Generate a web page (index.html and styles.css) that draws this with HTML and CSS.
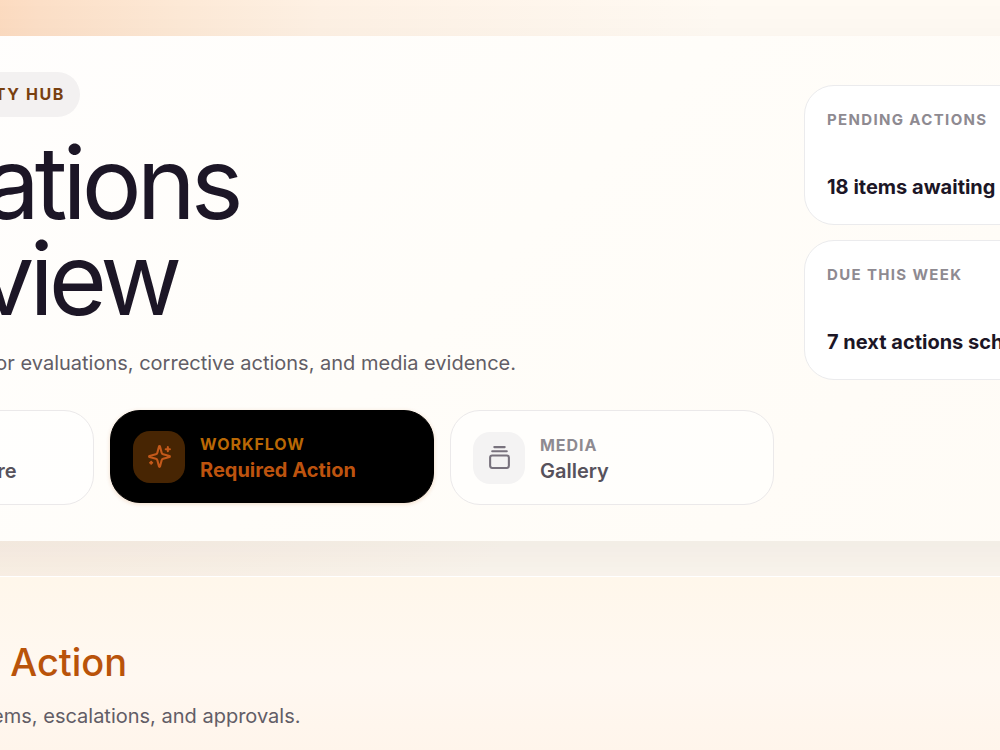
FILE: index.html
```html
<!DOCTYPE html>
<html lang="en">

<head>
    <meta charset="UTF-8">
    <title>Operations Overview</title>
    <link rel="stylesheet" href="styles.css">
</head>

<body>
    <main class="page">
        <header class="hero">
            <div class="intro">
                <p class="pill">Quality Activity Hub</p>
                <h1>Operations<br>Overview</h1>
                <p class="lead">Dashboard workspace for evaluations, corrective actions, and media evidence.</p>
                <nav class="tabs">
                    <a class="tab" href="#care">
                        <span class="icon"></span>
                        <span class="label">
                            <span class="kicker">Review</span>
                            <span class="name">Continuing Care</span>
                        </span>
                    </a>
                    <a class="tab active" href="#action">
                        <span class="icon">
                            <svg viewBox="0 0 24 24">
                                <path d="M9.937 15.5A2 2 0 0 0 8.5 14.063l-6.135-1.582a.5.5 0 0 1 0-.962L8.5 9.936A2 2 0 0 0 9.937 8.5l1.582-6.135a.5.5 0 0 1 .963 0L14.063 8.5A2 2 0 0 0 15.5 9.937l6.135 1.581a.5.5 0 0 1 0 .964L15.5 14.063a2 2 0 0 0-1.437 1.437l-1.582 6.135a.5.5 0 0 1-.963 0z" />
                                <path d="M20 3v4M22 5h-4M4 17v2M5 18H3" />
                            </svg>
                        </span>
                        <span class="label">
                            <span class="kicker">Workflow</span>
                            <span class="name">Required Action</span>
                        </span>
                    </a>
                    <a class="tab" href="#gallery">
                        <span class="icon">
                            <svg viewBox="0 0 24 24">
                                <path d="M7 2h10M5 6h14" />
                                <rect x="3" y="10" width="18" height="12" rx="2" />
                            </svg>
                        </span>
                        <span class="label">
                            <span class="kicker">Media</span>
                            <span class="name">Gallery</span>
                        </span>
                    </a>
                </nav>
            </div>
            <aside class="stats">
                <div class="stat">
                    <p class="kicker">Pending Actions</p>
                    <p class="value">18 items awaiting review</p>
                </div>
                <div class="stat">
                    <p class="kicker">Due This Week</p>
                    <p class="value">7 next actions scheduled</p>
                </div>
            </aside>
        </header>
        <section class="panel" id="action">
            <span class="icon"></span>
            <div>
                <h2>Required Action</h2>
                <p class="lead">Prioritize open items, escalations, and approvals.</p>
            </div>
        </section>
    </main>
</body>

</html>
```
FILE: styles.css
```css
* {
    box-sizing: border-box;
}

html {
    overflow: hidden;
}

body {
    margin: 0;
    height: 100vh;
    overflow: hidden;
    font-family: Inter, "Liberation Sans", sans-serif;
    color: #1c1626;
    background: radial-gradient(circle at -80px 0, #fdd3b2 0, #fcdfc7 120px, #fde9d6 260px, #fef1e4 400px, rgba(255, 247, 236, 0) 800px), #fffaf3;
}

h1,
h2,
p {
    margin: 0;
}

/* the board is wider than the window on both sides */
.page {
    margin: 0 -200px 0 -266px;
    padding-top: 36px;
    display: flex;
    flex-direction: column;
    gap: 35px;
}

.hero {
    display: grid;
    grid-template-columns: 1fr 360px;
    gap: 30px;
    padding: 36px;
    background: linear-gradient(135deg, #fffefe, #fffdf9 50%, #fffbf5);
    box-shadow: 0 30px 70px rgba(60, 50, 40, 0.08);
}

.pill {
    width: 310px;
    padding: 0 15px;
    line-height: 45px;
    border-radius: 23px;
    background: #f3f1f1;
    color: #78400f;
    font-size: 16px;
    font-weight: 700;
    letter-spacing: 0.1em;
    text-align: right;
    text-transform: uppercase;
}

h1 {
    margin-top: 18px;
    font-size: 100px;
    line-height: 96px;
    font-weight: 400;
    letter-spacing: -5px;
}

.lead {
    color: #625d66;
    font-size: 20px;
    line-height: 32px;
}

.hero .lead {
    margin-top: 20px;
}

.tabs {
    display: grid;
    grid-template-columns: repeat(3, 1fr);
    gap: 16px;
    margin-top: 31px;
}

.tab {
    display: flex;
    align-items: center;
    gap: 15px;
    height: 95px;
    padding: 0 22px;
    border: 1px solid #ebe9ea;
    border-radius: 30px;
    background: rgba(255, 255, 255, 0.55);
    color: #57525c;
    text-decoration: none;
}

.icon {
    display: flex;
    align-items: center;
    justify-content: center;
    width: 52px;
    height: 52px;
    border-radius: 17px;
    background: #f4f3f3;
    color: #78727d;
}

.icon svg {
    width: 25px;
    height: 25px;
    fill: none;
    stroke: currentColor;
    stroke-width: 2;
    stroke-linecap: round;
    stroke-linejoin: round;
}

.label {
    display: flex;
    flex-direction: column;
    padding-top: 2px;
}

.kicker {
    color: #8e8a91;
    font-size: 16px;
    line-height: 24px;
    font-weight: 700;
    letter-spacing: 0.06em;
    text-transform: uppercase;
}

.name {
    font-size: 20px;
    line-height: 28px;
    font-weight: 600;
}

.active {
    height: 93px;
    border-color: #000;
    background: #000;
    color: #bd530e;
    box-shadow: 0 1px 4px rgba(180, 83, 9, 0.2);
}

.active .icon {
    background: #472503;
    color: #c4591a;
}

.active .kicker {
    color: #b96805;
}

.active .name {
    font-weight: 700;
}

.stats {
    display: flex;
    flex-direction: column;
    gap: 15px;
    padding-top: 13px;
}

.stat {
    display: flex;
    flex-direction: column;
    justify-content: space-between;
    height: 140px;
    padding: 22px;
    border: 1px solid #ebebed;
    border-radius: 30px;
    background: #fff;
}

.stat .kicker {
    font-size: 15px;
    letter-spacing: 0.09em;
}

.value {
    font-size: 20px;
    line-height: 30px;
    font-weight: 700;
}

.panel {
    display: flex;
    gap: 16px;
    min-height: 240px;
    padding: 61px 36px 36px;
    border-top: 1px solid #fff;
    background: linear-gradient(#fff7eb, #fff8f1 100px, #fff5eb 174px);
}

h2 {
    color: #b9530a;
    font-size: 38px;
    line-height: 48px;
    font-weight: 500;
}

.panel .lead {
    margin-top: 14px;
}
```
